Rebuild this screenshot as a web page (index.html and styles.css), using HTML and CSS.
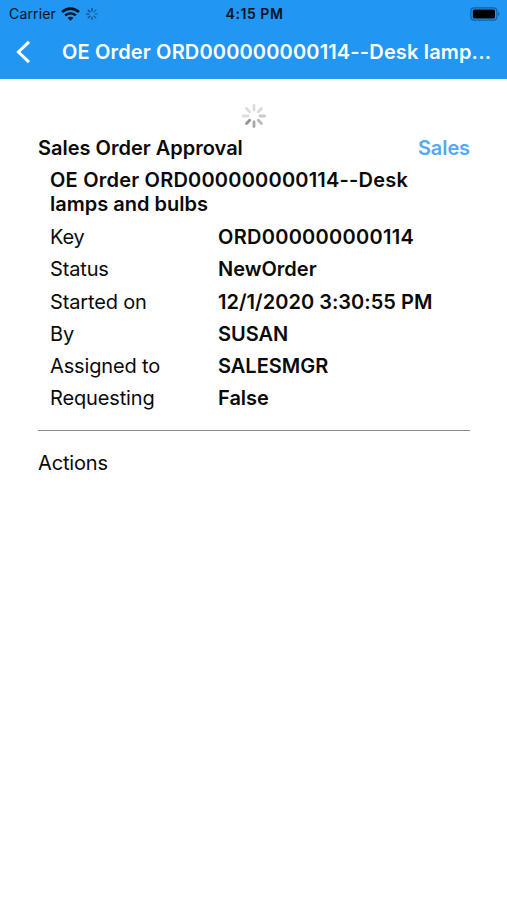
FILE: index.html
```html
<!DOCTYPE html>
<html lang="en">
<head>
    <meta charset="UTF-8">
    <meta name="viewport" content="width=device-width, initial-scale=1.0">
    <title>Sales Order Approval</title>
    <link rel="stylesheet" href="styles.css">
</head>
<body>
    <header class="header">
        <div class="status-bar">
            <div class="status-left">
                <span class="carrier">Carrier</span>
                <svg class="wifi" viewBox="0 0 18 13" width="19" height="14">
                    <path d="M1 4.6a11.5 11.5 0 0 1 16 0" fill="none" stroke="#061320" stroke-width="2.5"/>
                    <path d="M4 7.9a7.2 7.2 0 0 1 10 0" fill="none" stroke="#061320" stroke-width="2.3"/>
                    <path d="M9 13L6.3 10.2a3.8 3.8 0 0 1 5.4 0z" fill="#061320"/>
                </svg>
                <svg class="activity" viewBox="-10 -10 20 20" width="12" height="12" stroke="#0b3050" stroke-width="2" stroke-linecap="round">
                    <path d="M0-5V-9" opacity=".9"/>
                    <path d="M3.5-3.5L6.4-6.4" opacity=".5"/>
                    <path d="M5 0H9" opacity=".5"/>
                    <path d="M3.5 3.5L6.4 6.4" opacity=".6"/>
                    <path d="M0 5V9" opacity=".7"/>
                    <path d="M-3.5 3.5L-6.4 6.4" opacity=".8"/>
                    <path d="M-5 0H-9" opacity=".85"/>
                    <path d="M-3.5-3.5L-6.4-6.4" opacity=".9"/>
                </svg>
            </div>
            <span class="time">4:15 PM</span>
            <svg class="battery" viewBox="0 0 30 14" width="30" height="14">
                <rect x=".9" y=".9" width="26" height="12.2" rx="3.4" fill="none" stroke="#14609f" stroke-width="1.2"/>
                <rect x="2.8" y="2.6" width="22.2" height="8.8" rx="1.6" fill="#000"/>
                <path d="M28.2 4.8c1.7.9 1.7 3.5 0 4.4z" fill="#14609f"/>
            </svg>
        </div>
        <div class="nav-bar">
            <svg class="back" viewBox="0 0 15 24" width="15" height="24">
                <path d="M13 1.8L2.4 12 13 22.2" fill="none" stroke="#fff" stroke-width="3"/>
            </svg>
            <h1>OE Order ORD000000000114--Desk lamp...</h1>
        </div>
    </header>

    <main class="content">
        <svg class="spinner" viewBox="-13 -13 26 26" width="26" height="26" stroke-width="2.8" stroke-linecap="round">
            <path d="M0-6V-10.6" stroke="#dcdcdc"/>
            <path d="M4.3-4.3L7.5-7.5" stroke="#d9d9d9"/>
            <path d="M6 0H10.6" stroke="#cacaca"/>
            <path d="M4.3 4.3L7.5 7.5" stroke="#b8b8b8"/>
            <path d="M0 6V10.6" stroke="#a6a6a6"/>
            <path d="M-4.3 4.3L-7.5 7.5" stroke="#929292"/>
            <path d="M-6 0H-10.6" stroke="#dedede"/>
            <path d="M-4.3-4.3L-7.5-7.5" stroke="#dcdcdc"/>
        </svg>

        <div class="title-row">
            <h2>Sales Order Approval</h2>
            <a class="category">Sales</a>
        </div>

        <section class="details">
            <h3><span class="order-no">OE Order ORD000000000114--Desk</span> lamps and bulbs</h3>
            <dl class="fields">
                <dt>Key</dt>
                <dd class="key">ORD000000000114</dd>
                <dt>Status</dt>
                <dd>NewOrder</dd>
                <dt>Started on</dt>
                <dd class="date">12/1/2020 3:30:55 PM</dd>
                <dt>By</dt>
                <dd>SUSAN</dd>
                <dt>Assigned to</dt>
                <dd>SALESMGR</dd>
                <dt>Requesting</dt>
                <dd>False</dd>
            </dl>
        </section>

        <div class="actions">Actions</div>
    </main>
</body>
</html>
```

FILE: styles.css
```css
* {
    margin: 0;
    padding: 0;
    box-sizing: border-box;
}

body {
    font-family: Inter, "Liberation Sans", sans-serif;
    font-size: 20px;
    line-height: 24.2px;
    letter-spacing: -0.15px;
    color: #0a0a0a;
    background: #fff;
    min-height: 100vh;
}

.header {
    height: 79px;
    background: #2196f3;
}

.status-bar {
    display: grid;
    grid-template-columns: 1fr auto 1fr;
    align-items: center;
    height: 27px;
    padding: 0 7px 0 9px;
    font-size: 14px;
    line-height: 27px;
    letter-spacing: 0.15px;
    color: #061320;
}

.status-left {
    display: flex;
    align-items: center;
}

.wifi {
    margin-left: 5px;
}

.activity {
    margin-left: 6px;
}

.time {
    font-weight: 600;
    letter-spacing: 0.55px;
}

.battery {
    justify-self: end;
}

.nav-bar {
    display: flex;
    align-items: center;
    height: 50px;
    padding-left: 16px;
}

.nav-bar h1 {
    margin-left: 31px;
    font-size: 20px;
    font-weight: 600;
    letter-spacing: 0.16px;
    color: #fff;
    white-space: nowrap;
}

.content {
    padding: 24px 37px 0 38px;
}

.spinner {
    display: block;
    margin: 0 auto;
}

.title-row {
    display: flex;
    justify-content: space-between;
    margin-top: 7px;
}

h2,
h3 {
    font-size: 20px;
    font-weight: 600;
    letter-spacing: 0;
}

.order-no {
    letter-spacing: 0.21px;
}

.category {
    font-weight: 600;
    letter-spacing: -0.1px;
    color: #55a8f2;
}

.details {
    padding: 8px 12px 20px;
    border-bottom: 1px solid #8c8c8c;
}

.fields {
    display: grid;
    grid-template-columns: 168px 1fr;
    row-gap: 8px;
    margin-top: 8.6px;
}

dd {
    font-weight: 600;
    letter-spacing: 0;
}

.key {
    letter-spacing: 0.28px;
}

.date {
    letter-spacing: 0.03px;
}

.actions {
    margin-top: 20px;
}
```
